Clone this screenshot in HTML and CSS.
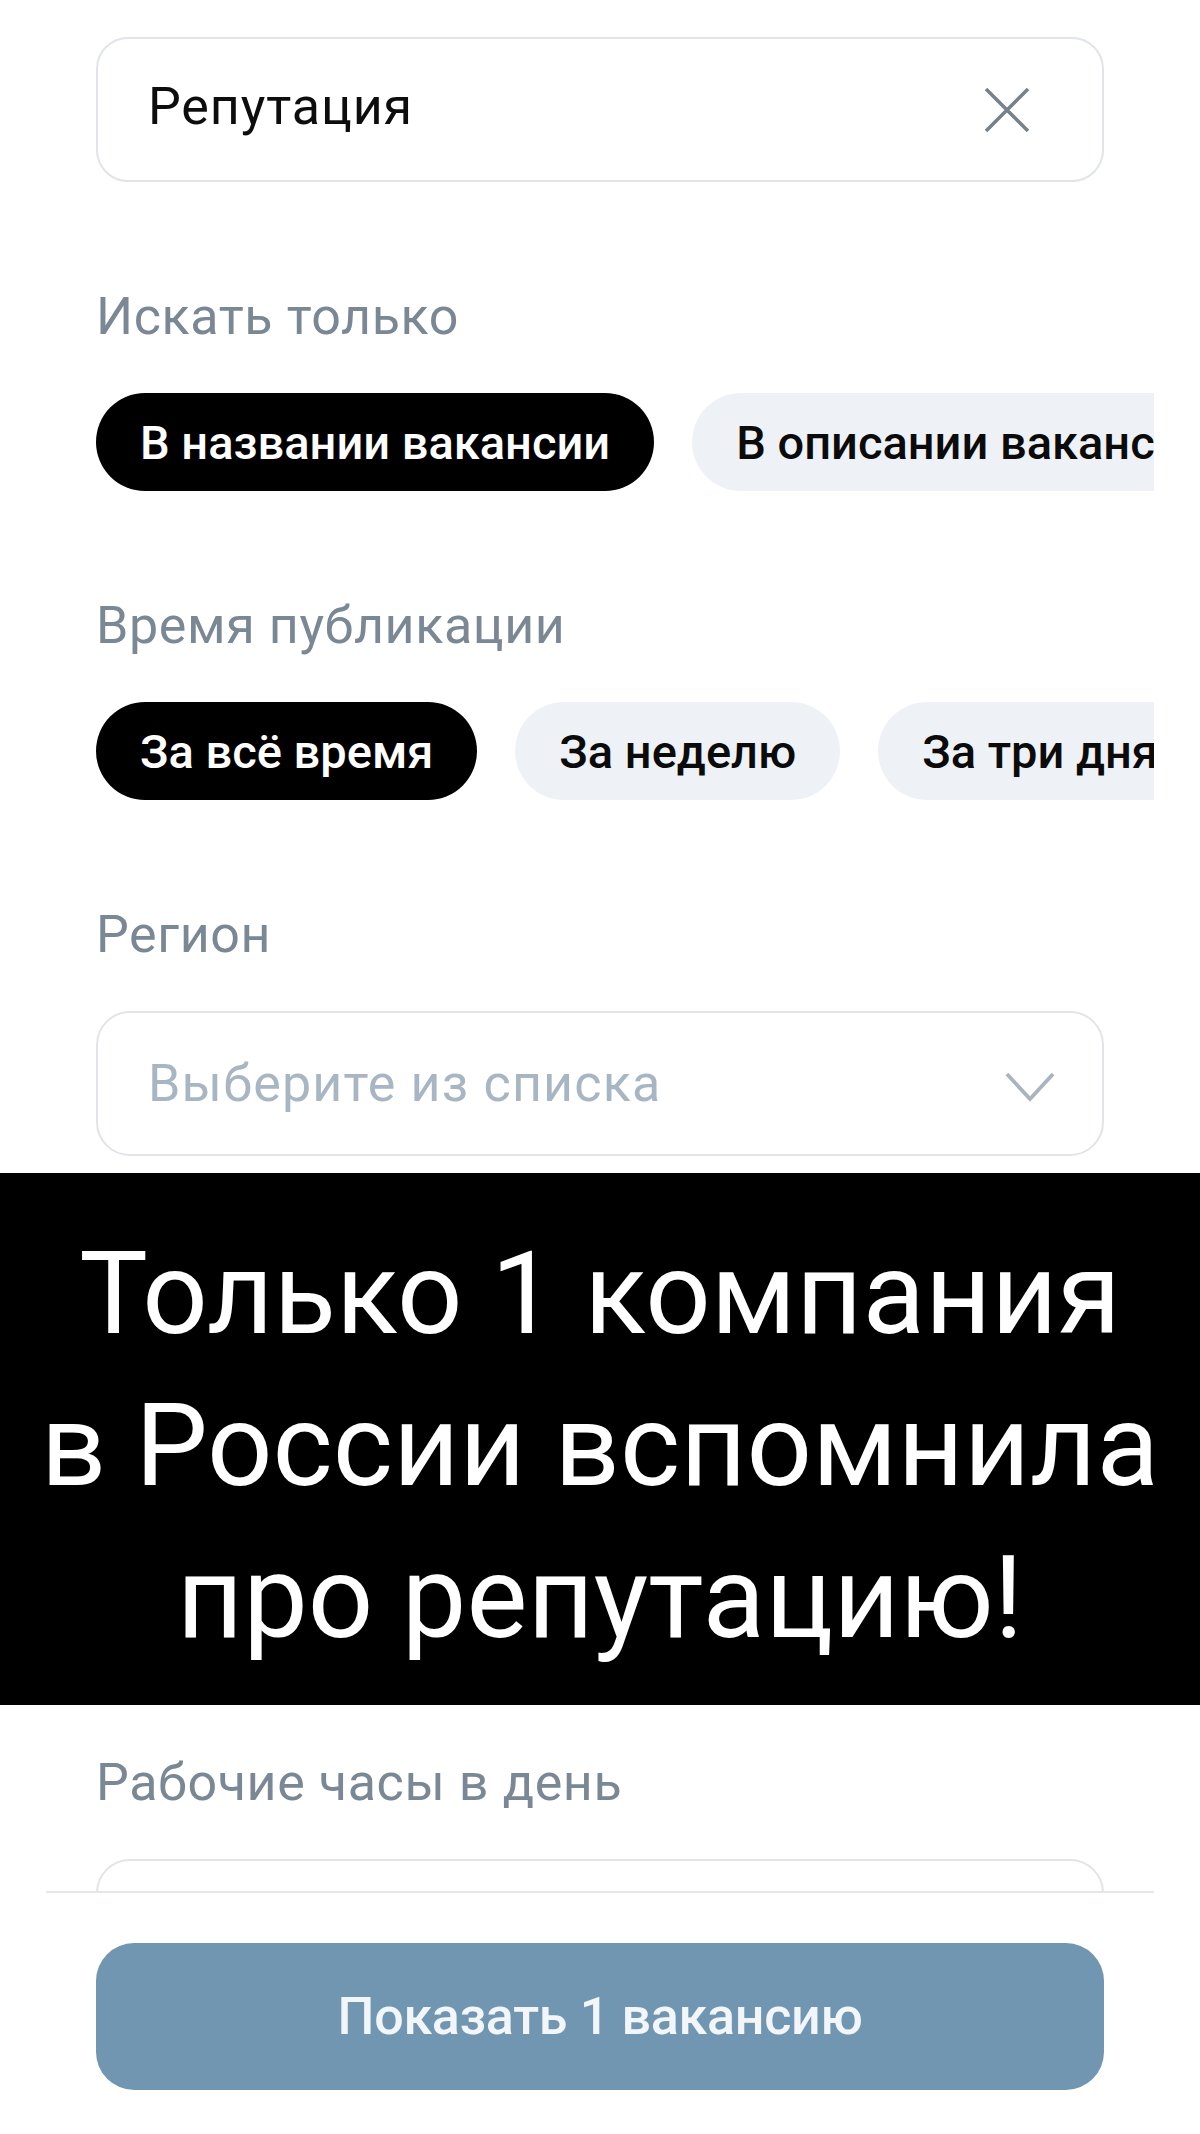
FILE: index.html
```html
<!DOCTYPE html>
<html lang="ru">
<head>
<meta charset="utf-8">
<title>Фильтры поиска</title>
<link rel="stylesheet" href="styles.css">
</head>
<body>
<div class="page">
  <main class="scroll">
    <div class="search-field">
      <span class="search-text">Репутация</span>
      <svg class="clear-icon" viewBox="0 0 48 48" aria-hidden="true">
        <path d="M3 3 L45 45 M45 3 L3 45" />
      </svg>
    </div>

    <section class="section">
      <h2 class="label">Искать только</h2>
      <div class="chips">
        <span class="chip chip-active">В названии вакансии</span>
        <span class="chip">В описании вакансии</span>
        <span class="chip">В названии компании</span>
      </div>
    </section>

    <section class="section">
      <h2 class="label">Время публикации</h2>
      <div class="chips">
        <span class="chip chip-active">За всё время</span>
        <span class="chip">За неделю</span>
        <span class="chip">За три дня</span>
        <span class="chip">За сутки</span>
      </div>
    </section>

    <section class="section">
      <h2 class="label">Регион</h2>
      <div class="select-field">
        <span class="placeholder">Выберите из списка</span>
        <svg class="chevron" viewBox="0 0 52 31" aria-hidden="true">
          <path d="M2 2 L26 28 L50 2" />
        </svg>
      </div>
    </section>

    <div class="caption">
      <p class="caption-line">Только 1 компания</p>
      <p class="caption-line">в России вспомнила</p>
      <p class="caption-line">про репутацию!</p>
    </div>

    <section class="section section-after-caption">
      <h2 class="label">Рабочие часы в день</h2>
      <div class="select-field"></div>
    </section>
  </main>

  <footer class="footer">
    <button class="submit" type="button">Показать 1 вакансию</button>
  </footer>
</div>
</body>
</html>
```

FILE: styles.css
```css
* {
  box-sizing: border-box;
}

html, body {
  margin: 0;
  padding: 0;
  background: #ffffff;
}

body {
  font-family: Roboto, "Noto Sans", "Liberation Sans", sans-serif;
  color: #000000;
}

.page {
  width: 1200px;
  height: 2134px;
  display: flex;
  flex-direction: column;
  overflow: hidden;
}

.scroll {
  flex: 1;
  overflow: hidden;
  padding-top: 37px;
}

.search-field {
  margin: 0 96px;
  height: 145px;
  border: 2px solid #e1e4e8;
  border-radius: 32px;
  display: flex;
  align-items: center;
  padding: 0 71px 0 50px;
}

.search-text {
  flex: 1;
  font-size: 52px;
  line-height: 60px;
  letter-spacing: 0.9px;
  color: #0d0d0d;
  padding-bottom: 6px;
}

.clear-icon {
  width: 48px;
  height: 48px;
  fill: none;
  stroke: #78828c;
  stroke-width: 3.6;
}

.section {
  margin-top: 105px;
}

.label {
  margin: 0 0 46px;
  padding: 0 96px;
  font-size: 52px;
  line-height: 60px;
  letter-spacing: 0.6px;
  font-weight: 400;
  color: #7a8794;
}

.chips {
  margin-right: 46px;
  padding-left: 96px;
  display: flex;
  gap: 38px;
  overflow: hidden;
}

.chip {
  flex: none;
  height: 98px;
  padding: 0 44px;
  border-radius: 49px;
  background: #eef2f6;
  display: flex;
  align-items: center;
  font-size: 47px;
  font-weight: 500;
  color: #0b0b0b;
  white-space: nowrap;
}

.chip-active {
  background: #000000;
  color: #ffffff;
}

.select-field {
  margin: 0 96px;
  height: 145px;
  border: 2px solid #e1e4e8;
  border-radius: 34px;
  display: flex;
  align-items: center;
  padding: 0 47px 0 50px;
}

.placeholder {
  flex: 1;
  font-size: 52px;
  line-height: 60px;
  letter-spacing: 1.2px;
  color: #a8b6c3;
}

.chevron {
  width: 50px;
  height: 30px;
  fill: none;
  stroke: #a9b4bf;
  stroke-width: 4;
  margin-top: 6px;
}

.caption {
  margin-top: 17px;
  height: 532px;
  background: #000000;
  padding-top: 45px;
  text-align: center;
}

.caption-line {
  margin: 0;
  font-size: 115px;
  line-height: 152px;
  font-weight: 400;
  color: #ffffff;
  white-space: nowrap;
}

.section-after-caption {
  margin-top: 48px;
}

.footer {
  flex: none;
  margin: 0 46px;
  border-top: 2px solid #e3e6ea;
  padding: 50px 50px 44px;
}

.submit {
  display: block;
  width: 100%;
  height: 147px;
  border: none;
  border-radius: 38px;
  background: #7096b1;
  color: #f2f6f9;
  font-family: Roboto, "Noto Sans", "Liberation Sans", sans-serif;
  font-size: 52px;
  font-weight: 500;
  letter-spacing: -0.3px;
}
```
